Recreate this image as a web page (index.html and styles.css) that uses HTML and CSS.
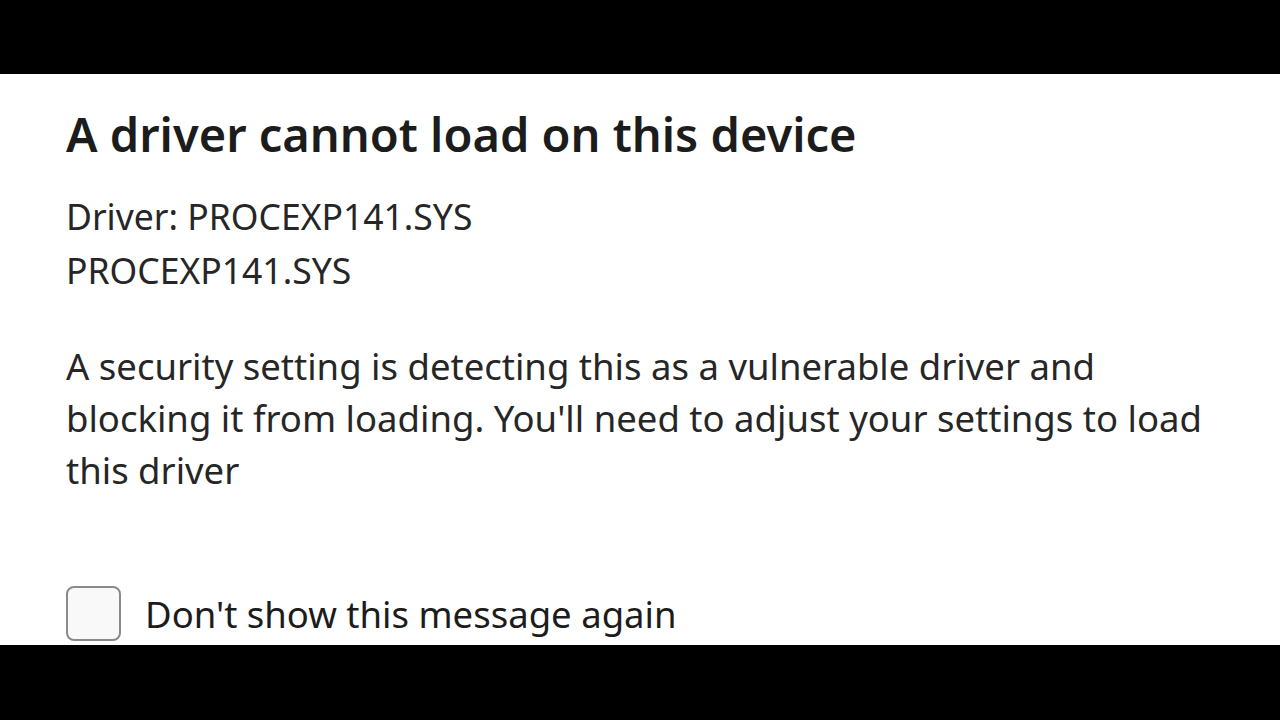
FILE: index.html
```html
<!DOCTYPE html>
<html lang="en">
<head>
  <meta charset="UTF-8">
  <title>A driver cannot load on this device</title>
  <link rel="stylesheet" href="styles.css">
</head>
<body>

  <div class="dialog">
    <h1 class="title">A driver cannot load on this device</h1>
    <div class="driver-info">
      <div>Driver: PROCEXP141.SYS</div>
      <div>PROCEXP141.SYS</div>
    </div>
    <p class="message">A security setting is detecting this as a vulnerable driver and blocking it from loading. You'll need to adjust your settings to load this driver</p>
    <label class="option">
      <span class="checkbox"></span>
      <span>Don't show this message again</span>
    </label>
  </div>

</body>
</html>
```

FILE: styles.css
```css
body {
  margin: 0;
  background: #000;
  font-family: 'Noto Sans', 'Open Sans', sans-serif;
  height: 720px;
  overflow: hidden;
}

.dialog {
  margin-top: 74px;
  height: 571px;
  background: #fff;
  padding: 0 40px 0 66px;
  box-sizing: border-box;
  overflow: hidden;
}

.title {
  margin: 0;
  padding-top: 30px;
  font-size: 47px;
  line-height: 60px;
  font-weight: 600;
  color: #1c1c1c;
}

.driver-info {
  margin-top: 25px;
  font-size: 35.5px;
  line-height: 54px;
  color: #262626;
}

.message {
  margin: 43px 0 0;
  font-size: 36.5px;
  line-height: 52px;
  color: #262626;
  max-width: 1165px;
}

.option {
  display: flex;
  align-items: center;
  gap: 24px;
  margin-top: 90px;
  font-size: 36.5px;
  color: #1c1c1c;
}

.checkbox {
  width: 51px;
  height: 51px;
  border: 2px solid #8a8a8a;
  border-radius: 8px;
  background: #f9f9f9;
  flex-shrink: 0;
}
```
